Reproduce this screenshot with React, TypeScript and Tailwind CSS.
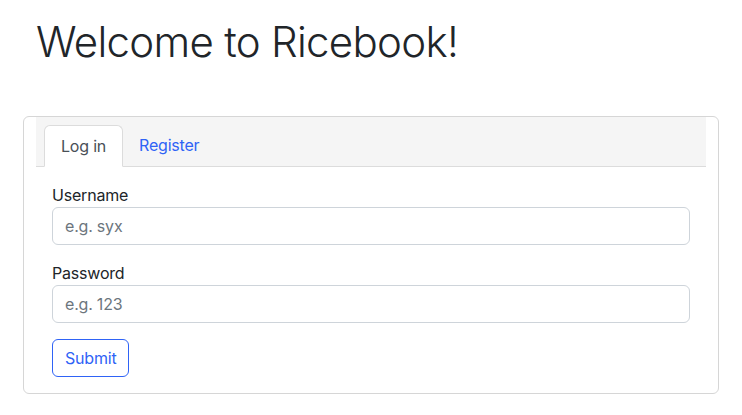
import React from "react";

export default function App() {
  return (
    <div
      className="w-[742px] h-[415px] bg-white pl-[23px] pt-[17px] text-[#212529] tracking-[-0.2px]"
      style={{ fontFamily: "Inter, 'Noto Sans', sans-serif" }}
    >
      <h1 className="pl-[13px] text-[42px] font-light leading-[50px] tracking-[-0.7px]">
        Welcome to Ricebook!
      </h1>
      <div className="mt-[49px] w-[696px] rounded-md border border-[#d6d6d6]">
        <div className="mx-3 flex border-b border-[#dcdcdc] bg-[#f5f5f5] px-2 pt-2">
          <div className="-mb-px rounded-t-md border border-[#dcdcdc] border-b-white bg-white px-4 py-2 text-base leading-6 text-[#495057]">
            Log in
          </div>
          <div className="px-4 py-2 text-base leading-6 text-[#2f63f6]">Register</div>
        </div>
        <div className="px-[28px] py-4">
          <div className="mb-4">
            <label className="block text-base leading-6">Username</label>
            <input
              className="block h-[38px] w-full rounded-md border border-[#ced4da] px-3 text-base placeholder-[#6c757d] outline-none"
              placeholder="e.g. syx"
            />
          </div>
          <div className="mb-4">
            <label className="block text-base leading-6">Password</label>
            <input
              className="block h-[38px] w-full rounded-md border border-[#ced4da] px-3 text-base placeholder-[#6c757d] outline-none"
              placeholder="e.g. 123"
            />
          </div>
          <button className="h-[38px] rounded-md border border-[#2f63f6] px-3 text-base text-[#2f63f6]">
            Submit
          </button>
        </div>
      </div>
    </div>
  );
}
